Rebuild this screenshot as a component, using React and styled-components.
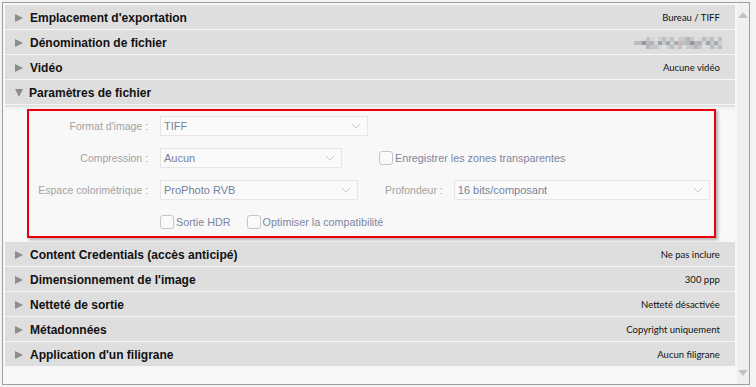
import styled, { createGlobalStyle } from "styled-components";

const GlobalStyle = createGlobalStyle`
  html, body {
    margin: 0;
    padding: 0;
    background: #f3f3f3;
  }
  * {
    box-sizing: border-box;
  }
`;

const Frame = styled.div`
  margin: 2px 0 0 2px;
  width: 748px;
  height: 383px;
  border: 1px solid #a0a0a0;
  background: #f7f7f7;
  display: flex;
  overflow: hidden;
`;

const Content = styled.div`
  flex: 1;
  padding: 2px 0 0 2px;
  display: flex;
  flex-direction: column;
  gap: 1px;
`;

const Scrollbar = styled.div`
  width: 16px;
  margin-left: 2px;
  background: #f0f0f0;
  display: flex;
  flex-direction: column;
  justify-content: space-between;
  align-items: center;
  padding: 9px 0 8px;
`;

const Arrow = styled.div`
  width: 0;
  height: 0;
  border-left: 5px solid transparent;
  border-right: 5px solid transparent;
  ${({ $down }) =>
    $down ? "border-top: 6px solid #c3c3c3;" : "border-bottom: 6px solid #c3c3c3;"}
`;

const Header = styled.div`
  height: 24px;
  background: #dedede;
  display: flex;
  align-items: center;
  padding: 1px 15px 0 10px;
  font-family: "Liberation Sans", Arial, sans-serif;
`;

const Triangle = styled.span`
  width: 0;
  height: 0;
  margin-right: 7px;
  ${({ $open }) =>
    $open
      ? `border-left: 4.5px solid transparent;
         border-right: 4.5px solid transparent;
         border-top: 8px solid #8c8c8c;
         margin-right: 6px;`
      : `border-top: 4.5px solid transparent;
         border-bottom: 4.5px solid transparent;
         border-left: 8px solid #8c8c8c;`}
`;

const Title = styled.span`
  font-size: 12px;
  font-weight: bold;
  color: #111;
  flex: 1;
`;

const Summary = styled.span`
  font-family: Lato, "Liberation Sans", sans-serif;
  font-size: 9.5px;
  color: #111;
`;

const Panel = styled.div`
  height: 136px;
  background: #f8f8f8;
  box-shadow: inset 0 4px 4px -3px rgba(0, 0, 0, 0.18);
  padding: 4px 19px 0 22px;
`;

const RedBox = styled.div`
  height: 129px;
  border: 2px solid #e8000b;
  box-shadow: 2px 2px 3px rgba(0, 0, 0, 0.3);
  padding: 5px 4px 0 0;
  display: flex;
  flex-direction: column;
  gap: 12px;
  font-family: "Liberation Sans", Arial, sans-serif;
  font-size: 10.5px;
`;

const FieldRow = styled.div`
  height: 20px;
  display: flex;
  align-items: center;
  white-space: nowrap;
  padding-left: ${({ $indent }) => $indent || 0}px;
`;

const Label = styled.span`
  color: #a2a2a2;
  flex-shrink: 0;
  ${({ $col }) =>
    $col
      ? `width: 119px; text-align: right; margin-right: 12px;`
      : `margin: 0 11px 0 27px;`}
`;

const Select = styled.div`
  width: ${({ $w }) => $w}px;
  flex-shrink: 0;
  height: 20px;
  border: 1px solid #e6e6e6;
  background: #fafafa;
  display: flex;
  align-items: center;
  justify-content: space-between;
  padding: 0 6px 0 3px;
  color: #75819c;
  font-size: 11px;
`;

const Check = styled.label`
  display: flex;
  align-items: center;
  gap: 2px;
  color: #7b869e;
  font-size: 10.8px;
  margin-left: ${({ $ml }) => $ml || 0}px;
`;

const Box = styled.span`
  width: 14px;
  height: 14px;
  border: 1px solid #c6c6c6;
  border-radius: 3px;
  background: #fafafa;
`;

const Blur = styled.svg`
  display: block;
  margin-right: -2px;
`;

function Chevron() {
  return (
    <svg width="10" height="6" viewBox="0 0 10 6">
      <path d="M1 1 L5 5 L9 1" fill="none" stroke="#c8c8c8" strokeWidth="1" />
    </svg>
  );
}

const blurColors = [
  "#b7b7b7", "#9aa0a8", "#c9b7b7", "#a7b1bb", "#cfcfcf", "#8f959c",
  "#c4c4c4", "#b3bec8", "#d4d4d4", "#a9a9a9", "#bcb2b2", "#9ba6b0",
];

function BlurredName() {
  const cells = [];
  for (let r = 0; r < 3; r++) {
    for (let c = 0; c < 22; c++) {
      if (r !== 1 && (c * 7 + r * 3) % 5 === 0) continue;
      if (c < 3 && r !== 1) continue;
      cells.push(
        <rect
          key={`${r}-${c}`}
          x={c * 4}
          y={r * 4}
          width="4"
          height="4"
          fill={blurColors[(c * 5 + r * 7) % blurColors.length]}
          opacity={r === 1 ? 0.95 : 0.55}
        />
      );
    }
  }
  return (
    <Blur width="88" height="12" viewBox="0 0 88 12">
      {cells}
    </Blur>
  );
}

function SectionHeader({ title, summary, open }) {
  return (
    <Header>
      <Triangle $open={open} />
      <Title>{title}</Title>
      {summary && (typeof summary === "string" ? <Summary>{summary}</Summary> : summary)}
    </Header>
  );
}

const before = [
  { title: "Emplacement d'exportation", summary: "Bureau / TIFF" },
  { title: "Dénomination de fichier", summary: <BlurredName /> },
  { title: "Vidéo", summary: "Aucune vidéo" },
];

const after = [
  { title: "Content Credentials (accès anticipé)", summary: "Ne pas inclure" },
  { title: "Dimensionnement de l'image", summary: "300 ppp" },
  { title: "Netteté de sortie", summary: "Netteté désactivée" },
  { title: "Métadonnées", summary: "Copyright uniquement" },
  { title: "Application d'un filigrane", summary: "Aucun filigrane" },
];

export default function App() {
  return (
    <>
      <GlobalStyle />
      <Frame>
        <Content>
          {before.map((s) => (
            <SectionHeader key={s.title} {...s} />
          ))}
          <SectionHeader title="Paramètres de fichier" open />
          <Panel>
            <RedBox>
              <FieldRow>
                <Label $col>Format d'image :</Label>
                <Select $w={208}>
                  TIFF
                  <Chevron />
                </Select>
              </FieldRow>
              <FieldRow>
                <Label $col>Compression :</Label>
                <Select $w={182}>
                  Aucun
                  <Chevron />
                </Select>
                <Check $ml={37}>
                  <Box />
                  Enregistrer les zones transparentes
                </Check>
              </FieldRow>
              <FieldRow>
                <Label $col>Espace colorimétrique :</Label>
                <Select $w={198}>
                  ProPhoto RVB
                  <Chevron />
                </Select>
                <Label>Profondeur :</Label>
                <Select $w={256}>
                  16 bits/composant
                  <Chevron />
                </Select>
              </FieldRow>
              <FieldRow $indent={131}>
                <Check>
                  <Box />
                  Sortie HDR
                </Check>
                <Check $ml={16}>
                  <Box />
                  Optimiser la compatibilité
                </Check>
              </FieldRow>
            </RedBox>
          </Panel>
          {after.map((s) => (
            <SectionHeader key={s.title} {...s} />
          ))}
        </Content>
        <Scrollbar>
          <Arrow />
          <Arrow $down />
        </Scrollbar>
      </Frame>
    </>
  );
}
